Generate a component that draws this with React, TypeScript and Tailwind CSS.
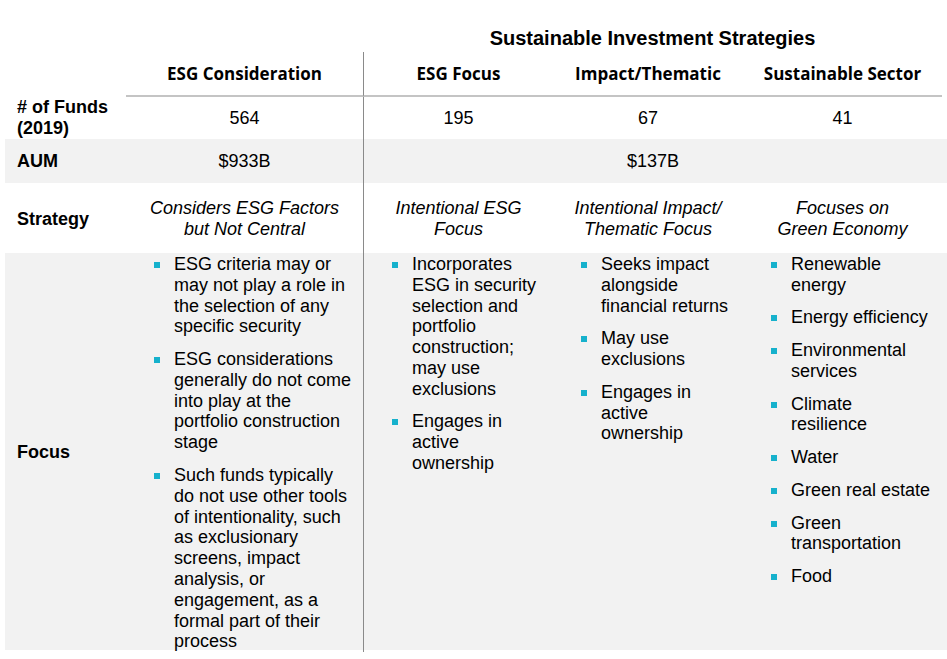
const body = { fontFamily: '"Liberation Sans", Arial, sans-serif' };
const head = { fontFamily: '"Open Sans", Lato, sans-serif' };

const cols = 'grid grid-cols-[121px_237px_190px_190px_199px]';
const divider = 'border-l-[1.5px] border-[#8a8a8a]';

interface BulletListProps {
  items: string[];
  pr: string;
}

const BulletList = ({ items, pr }: BulletListProps) => (
  <ul className={`flex flex-col gap-[11.9px] pl-[28px] ${pr}`}>
    {items.map((item) => (
      <li key={item} className="flex gap-[14px]">
        <span className="mt-[8px] h-[6px] w-[6px] shrink-0 bg-[#16b1cc]" />
        <span className="text-[18px] leading-[20.8px] text-black">{item}</span>
      </li>
    ))}
  </ul>
);

const headers = ['ESG Consideration', 'ESG Focus', 'Impact/Thematic', 'Sustainable Sector'];
const funds = ['564', '195', '67', '41'];

export default function App() {
  return (
    <div className="h-[659px] w-[947px] overflow-hidden bg-white pl-[5px] text-black" style={body}>
      {/* title row */}
      <div className={`${cols} h-[52px]`}>
        <div className="col-span-2" />
        <div className="col-span-3 pt-[27px] text-center text-[20px] font-bold leading-[23px]">
          Sustainable Investment Strategies
        </div>
      </div>

      {/* column headers */}
      <div className={`${cols} h-[45px]`}>
        <div />
        {headers.map((h, i) => (
          <div
            key={h}
            className={`flex items-center justify-center border-b-2 border-b-[#c4c4c4] text-[17px] font-bold ${
              i === 1 ? divider : ''
            }`}
            style={head}
          >
            {h}
          </div>
        ))}
      </div>

      {/* # of funds */}
      <div className={`${cols} h-[42px] text-[18px] leading-[21px]`}>
        <div className="flex items-center pl-[12px] font-bold">
          # of Funds
          <br />
          (2019)
        </div>
        {funds.map((f, i) => (
          <div key={f} className={`flex items-center justify-center ${i === 1 ? divider : ''}`}>
            {f}
          </div>
        ))}
      </div>

      {/* AUM */}
      <div className={`${cols} h-[44px] bg-[#f2f2f2] text-[18px]`}>
        <div className="flex items-center pl-[12px] font-bold">AUM</div>
        <div className="flex items-center justify-center">$933B</div>
        <div className={`col-span-3 flex items-center justify-center ${divider}`}>$137B</div>
      </div>

      {/* strategy */}
      <div className={`${cols} h-[70px] pt-[2px] text-[18px] leading-[21px]`}>
        <div className="flex items-center pl-[12px] font-bold">Strategy</div>
        <div className="flex items-center justify-center text-center italic">
          <span>
            Considers ESG Factors
            <br />
            but Not Central
          </span>
        </div>
        <div className={`-mt-[2px] flex items-center justify-center pt-[2px] text-center italic ${divider}`}>
          <span>
            Intentional ESG
            <br />
            Focus
          </span>
        </div>
        <div className="flex items-center justify-center text-center italic">
          <span>
            Intentional Impact/
            <br />
            Thematic Focus
          </span>
        </div>
        <div className="flex items-center justify-center text-center italic">
          <span>
            Focuses on
            <br />
            Green Economy
          </span>
        </div>
      </div>

      {/* focus */}
      <div className={`${cols} h-[397px] bg-[#f2f2f2]`}>
        <div className="flex items-center pl-[12px] text-[18px] font-bold">Focus</div>
        <div className="pt-[1px]">
          <BulletList
            pr="pr-[9px]"
            items={[
              'ESG criteria may or may not play a role in the selection of any specific security',
              'ESG considerations generally do not come into play at the portfolio construction stage',
              'Such funds typically do not use other tools of intentionality, such as exclusionary screens, impact analysis, or engagement, as a formal part of their process',
            ]}
          />
        </div>
        <div className={`pt-[1px] ${divider}`}>
          <BulletList
            pr="pr-[12px]"
            items={[
              'Incorporates ESG in security selection and portfolio construction; may use exclusions',
              'Engages in active ownership',
            ]}
          />
        </div>
        <div className="pt-[1px]">
          <BulletList
            pr="pr-[12px]"
            items={['Seeks impact alongside financial returns', 'May use exclusions', 'Engages in active ownership']}
          />
        </div>
        <div className="pt-[1px]">
          <BulletList
            pr="pr-[11px]"
            items={[
              'Renewable energy',
              'Energy efficiency',
              'Environmental services',
              'Climate resilience',
              'Water',
              'Green real estate',
              'Green transportation',
              'Food',
            ]}
          />
        </div>
      </div>
    </div>
  );
}
